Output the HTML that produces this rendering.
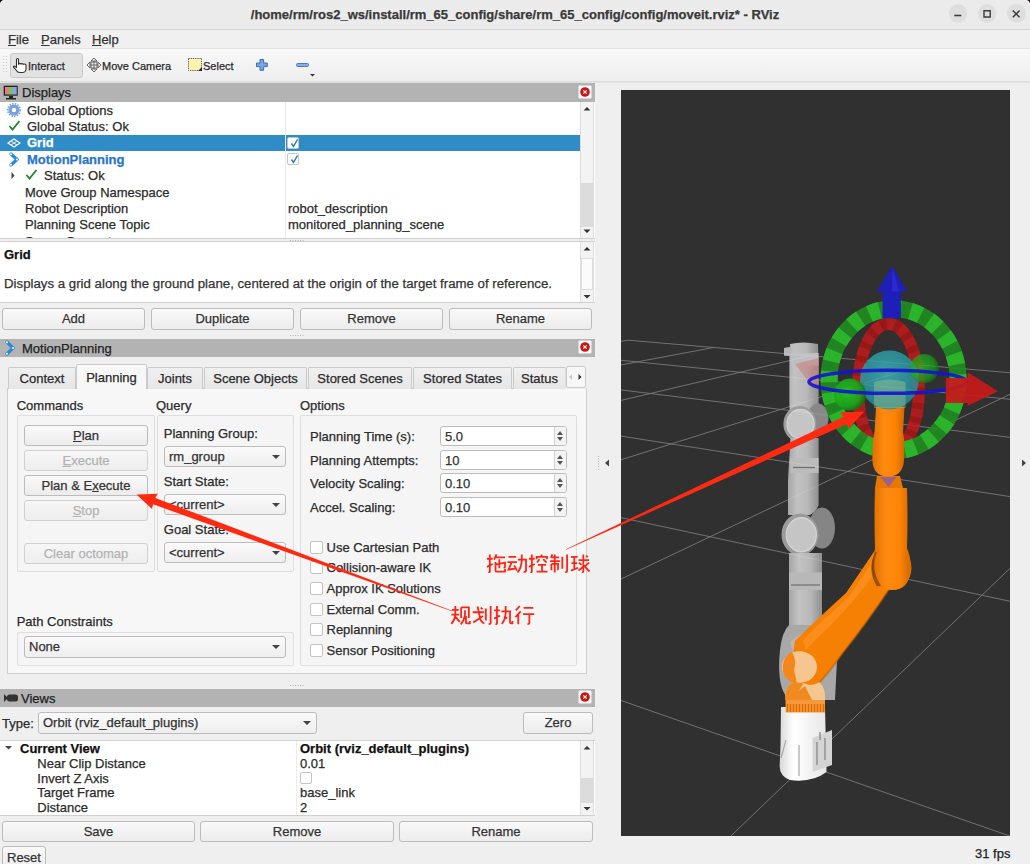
<!DOCTYPE html>
<html><head><meta charset="utf-8"><style>
*{box-sizing:border-box;margin:0;padding:0}
html,body{width:1030px;height:864px;overflow:hidden;background:#efefef;font-family:"Liberation Sans",sans-serif;font-size:13px;color:#2b2b2b;-webkit-text-stroke:0.25px}
.a{position:absolute}
.t{position:absolute;white-space:nowrap;line-height:16px}
.btn{position:absolute;border:1px solid #bcbcbc;border-radius:3px;background:linear-gradient(#f9f9f9,#ececec);text-align:center;color:#333;white-space:nowrap}
.btn.dis{color:#b3b3b3;border-color:#d0d0d0;background:linear-gradient(#f6f6f6,#eeeeee)}
.combo{position:absolute;border:1px solid #bcbcbc;border-radius:3px;background:linear-gradient(#fafafa,#eeeeee);padding-left:4px;white-space:nowrap;color:#333}
.combo:after{content:"";position:absolute;right:5px;top:50%;margin-top:-2px;border-left:4px solid transparent;border-right:4px solid transparent;border-top:4px solid #444}
.spin{position:absolute;border:1px solid #bcbcbc;border-radius:3px;background:#fff;padding-left:4px;color:#333}
.spin i{position:absolute;right:0;top:0;bottom:0;border-left:1px solid #d0d0d0;background:#f4f4f4;width:12px;border-radius:0 2px 2px 0}
.spin b{position:absolute;right:3px;border-left:3.5px solid transparent;border-right:3.5px solid transparent}
.spin b.up{top:4px;border-bottom:4px solid #555}
.spin b.dn{bottom:4px;border-top:4px solid #555}
.cb{position:absolute;border:1px solid #c4c4c4;border-radius:2px;background:#fff}
.grp{position:absolute;border:1px solid #dedede;border-radius:2px;background:#f5f5f5}
.close{position:absolute;width:14px;height:14px;border-radius:2px;background:#fff;border:1px solid #d4d4d4}
.hdr{position:absolute;left:0;width:595px;background:#b3b3b3}
</style></head><body>
<div class="a" style="left:0px;top:0px;width:1030px;height:29px;background:#ebebeb"></div>
<div class="a" style="left:0px;top:29px;width:1030px;height:1px;background:#d6d6d6"></div>
<div class="t" style="left:0;top:7px;width:1030px;text-align:center;font-weight:bold;color:#3a3a3a">/home/rm/ros2_ws/install/rm_65_config/share/rm_65_config/config/moveit.rviz* - RViz</div>
<div class="a" style="left:948.5px;top:4.4px;width:18.4px;height:18.4px;border-radius:50%;background:#dedede"></div>
<div class="a" style="left:978.0999999999999px;top:4.4px;width:18.4px;height:18.4px;border-radius:50%;background:#dedede"></div>
<div class="a" style="left:1007.1999999999999px;top:4.4px;width:18.4px;height:18.4px;border-radius:50%;background:#dedede"></div>
<svg class="a" style="left:940px;top:0" width="90" height="29"><path d="M14.3 15.5H21.3" stroke="#3c3c3c" stroke-width="1.6"/><path d="M44 10.8h6.2v6.2h-6.2z" stroke="#3c3c3c" stroke-width="1.4" fill="none"/><path d="M72.8 10.5L79.6 17.3M79.6 10.5L72.8 17.3" stroke="#3c3c3c" stroke-width="1.5"/></svg>
<svg class="a" style="left:0;top:0" width="8" height="8"><path d="M0 0H5Q0 0 0 5Z" fill="#111"/><path d="M5 0.6Q0.6 0.6 0.6 5" stroke="#fff" stroke-width="1" fill="none" opacity="0.8"/></svg>
<svg class="a" style="left:1022px;top:0" width="8" height="8"><path d="M8 0H3Q8 0 8 5Z" fill="#5a0a32"/><path d="M3 0.6Q7.4 0.6 7.4 5" stroke="#fff" stroke-width="1" fill="none" opacity="0.8"/></svg>
<div class="a" style="left:0px;top:30px;width:1030px;height:18px;background:#f0f0f0"></div>
<div class="a" style="left:0px;top:48px;width:1030px;height:1px;background:#e3e3e3"></div>
<div class="t" style="left:8px;top:32px;color:#333"><u>F</u>ile</div>
<div class="t" style="left:41px;top:32px;color:#333"><u>P</u>anels</div>
<div class="t" style="left:92px;top:32px;color:#333"><u>H</u>elp</div>
<div class="a" style="left:0px;top:49px;width:1030px;height:32px;background:linear-gradient(#f8f8f8,#eeeeee)"></div>
<div class="a" style="left:0px;top:81px;width:1030px;height:2px;background:linear-gradient(#dadada,#e6e6e6)"></div>
<div class="a" style="left:10px;top:53px;width:73px;height:25px;background:#e2e2e2;border:1px solid #c9c9c9;border-radius:3px"></div>
<svg class="a" style="left:2px;top:54px" width="6" height="24"><g fill="#c8c8c8"><rect x="1" y="2" width="1" height="1"/><rect x="4" y="2" width="1" height="1"/><rect x="1" y="5" width="1" height="1"/><rect x="4" y="5" width="1" height="1"/><rect x="1" y="8" width="1" height="1"/><rect x="4" y="8" width="1" height="1"/><rect x="1" y="11" width="1" height="1"/><rect x="4" y="11" width="1" height="1"/><rect x="1" y="14" width="1" height="1"/><rect x="4" y="14" width="1" height="1"/><rect x="1" y="17" width="1" height="1"/><rect x="4" y="17" width="1" height="1"/></g></svg>
<svg class="a" style="left:12px;top:57px" width="16" height="17"><path d="M4.5 10.5 V2.3 Q5.5 0.8 6.5 2.3 V7 Q7.7 5.8 9 7 Q10.3 6 11.5 7.3 Q12.8 6.6 14 7.8 V12.5 Q13.5 15.5 10.5 15.5 H7.5 Q5.5 15.5 4.5 13.5 L1.5 10.2 Q1.2 9 2.5 9 L4.5 10.5Z" fill="#fff" stroke="#333" stroke-width="1.1"/></svg>
<div class="t" style="left:28px;top:58px;font-size:11px;color:#2b2b2b">Interact</div>
<svg class="a" style="left:86px;top:57px" width="16" height="16"><g fill="none" stroke="#666" stroke-width="1"><path d="M8 1L11 4H5Z M8 15L11 12H5Z M1 8L4 5V11Z M15 8L12 5V11Z"/><rect x="5" y="5" width="6" height="6"/><path d="M8 4V12M4 8H12"/></g></svg>
<div class="t" style="left:102px;top:58px;font-size:11px;color:#2b2b2b">Move Camera</div>
<svg class="a" style="left:188px;top:58px" width="15" height="14"><rect x="0.5" y="0.5" width="13" height="12" fill="#f8f4b0" stroke="#555" stroke-dasharray="1.2 1" stroke-width="1"/><path d="M10 13L14 9V13Z" fill="#222"/></svg>
<div class="t" style="left:203px;top:58px;font-size:11px;color:#2b2b2b">Select</div>
<svg class="a" style="left:255px;top:58px" width="14" height="14"><path d="M5 1.5H8.6V5H12.3V8.6H8.6V12.3H5V8.6H1.5V5H5Z" fill="#7ba4dc" stroke="#3c6fb5" stroke-width="1"/></svg>
<svg class="a" style="left:295px;top:61px" width="22" height="20"><rect x="1.5" y="2.5" width="12" height="3" rx="1.2" fill="#8fb0de" stroke="#4d7cbd" stroke-width="1"/><path d="M15 13H20L17.5 15.5Z" fill="#333"/></svg>
<div class="a" style="left:0px;top:83px;width:595px;height:19px;background:#b3b3b3"></div>
<svg class="a" style="left:3px;top:85px" width="16" height="15"><rect x="0.7" y="0.7" width="14" height="10" fill="#222"/><rect x="2" y="2" width="4" height="7.5" fill="#e77"/><rect x="6" y="2" width="4" height="7.5" fill="#6c6"/><rect x="10" y="2" width="3.7" height="7.5" fill="#99e"/><path d="M6 11h4v2h3v1.5H3V13h3Z" fill="#222"/></svg>
<div class="t" style="left:22px;top:85px;color:#222">Displays</div>
<div class="close" style="left:578px;top:85px"><svg width="12" height="12" style="position:absolute;left:0;top:0"><circle cx="6" cy="6" r="4.8" fill="#cc1414"/><path d="M4.3 4.3L7.7 7.7M7.7 4.3L4.3 7.7" stroke="#fff" stroke-width="1.1"/></svg></div>
<div class="a" style="left:0px;top:102px;width:595px;height:137px;background:#fff"></div>
<div class="a" style="left:0px;top:238px;width:595px;height:1px;background:#d0d0d0"></div>
<div class="a" style="left:0px;top:135px;width:580px;height:16px;background:#308cc6"></div>
<div class="a" style="left:285px;top:102px;width:1px;height:136px;background:#e8e8e8"></div>
<div class="a" style="left:580px;top:102px;width:14px;height:136px;background:#f3f3f3;border-left:1px solid #ddd;border-right:1px solid #ddd"></div>
<div class="a" style="left:581px;top:183px;width:12px;height:44px;background:#dcdcdc"></div>
<svg class="a" style="left:580px;top:102px" width="14" height="136"><path d="M3.5 8.5L7 5L10.5 8.5Z M3.5 127.5L7 131L10.5 127.5Z" fill="#333"/></svg>
<svg class="a" style="left:7px;top:103px" width="14" height="14"><circle cx="7" cy="7" r="5.5" fill="#7aa0e0"/><circle cx="7" cy="7" r="2.2" fill="#fff"/><circle cx="7" cy="7" r="6.3" fill="none" stroke="#7aa0e0" stroke-width="1.6" stroke-dasharray="1.5 1.2"/></svg>
<div class="t" style="left:27px;top:102.5px;">Global Options</div>
<svg class="a" style="left:8px;top:119px" width="13" height="13"><path d="M1.5 7L4.5 10.5L11.5 2" stroke="#1c8a2a" stroke-width="1.8" fill="none"/></svg>
<div class="t" style="left:27px;top:118.9px;">Global Status: Ok</div>
<svg class="a" style="left:7px;top:136px" width="14" height="14"><path d="M1 7L7 3L13 7L7 11Z" fill="none" stroke="#fff" stroke-width="1.1"/><path d="M4 5L10 9M10 5L4 9" stroke="#fff" stroke-width="0.9"/></svg>
<div class="t" style="left:27px;top:135.3px;color:#fff;font-weight:bold">Grid</div>
<div class="cb" style="left:287px;top:137px;width:12px;height:12px"><svg width="11" height="11" style="position:absolute;left:1px;top:0px"><path d="M2.5 5.5 L4.5 8.5 L8.5 1.5" stroke="#2a74c4" stroke-width="1.4" fill="none"/></svg></div>
<svg class="a" style="left:8px;top:152px" width="14" height="15"><path d="M3 2L9 7.5L3 13" stroke="#2a8ad6" stroke-width="3.2" fill="none" stroke-linecap="round"/><circle cx="3" cy="2.2" r="1" fill="#fff"/><circle cx="9" cy="7.5" r="1" fill="#fff"/><circle cx="3" cy="12.8" r="1" fill="#fff"/></svg>
<div class="t" style="left:27px;top:151.7px;color:#2a75c9;font-weight:bold">MotionPlanning</div>
<div class="cb" style="left:287px;top:153px;width:12px;height:12px"><svg width="11" height="11" style="position:absolute;left:1px;top:0px"><path d="M2.5 5.5 L4.5 8.5 L8.5 1.5" stroke="#2a74c4" stroke-width="1.4" fill="none"/></svg></div>
<svg class="a" style="left:10px;top:171px" width="6" height="9"><path d="M1.5 1L4.5 4.5L1.5 8Z" fill="#444"/></svg>
<svg class="a" style="left:25px;top:168px" width="13" height="13"><path d="M1.5 7L4.5 10.5L11.5 2" stroke="#1c8a2a" stroke-width="1.8" fill="none"/></svg>
<div class="t" style="left:44px;top:168.1px;">Status: Ok</div>
<div class="t" style="left:25px;top:184.5px;">Move Group Namespace</div>
<div class="t" style="left:25px;top:200.9px;">Robot Description</div>
<div class="t" style="left:288px;top:200.9px;">robot_description</div>
<div class="t" style="left:25px;top:217.3px;">Planning Scene Topic</div>
<div class="t" style="left:288px;top:217.3px;">monitored_planning_scene</div>
<div class="a" style="left:0;top:230px;width:580px;height:8px;overflow:hidden"><div class="t" style="left:25px;top:3.5px">Scene Geometry</div></div>
<div class="a" style="left:0px;top:241px;width:595px;height:62px;background:#fff;border-top:1px solid #d0d0d0;border-bottom:1px solid #d0d0d0"></div>
<div class="t" style="left:4px;top:246.5px;font-weight:bold;color:#111">Grid</div>
<div class="t" style="left:4px;top:276px;color:#333;font-size:13.25px">Displays a grid along the ground plane, centered at the origin of the target frame of reference.</div>
<div class="a" style="left:580px;top:242px;width:14px;height:60px;background:#f3f3f3;border-left:1px solid #ddd;border-right:1px solid #ddd"></div>
<div class="a" style="left:581px;top:258px;width:12px;height:32px;background:#fbfbfb;border:1px solid #ddd"></div>
<svg class="a" style="left:580px;top:242px" width="14" height="60"><path d="M3.5 8.5L7 5L10.5 8.5Z M3.5 53L7 56.5L10.5 53Z" fill="#333"/></svg>
<div class="btn" style="left:2px;top:308px;width:143px;height:22px;line-height:20px;">Add</div>
<div class="btn" style="left:151px;top:308px;width:143px;height:22px;line-height:20px;">Duplicate</div>
<div class="btn" style="left:300px;top:308px;width:143px;height:22px;line-height:20px;">Remove</div>
<div class="btn" style="left:449px;top:308px;width:143px;height:22px;line-height:20px;">Rename</div>
<div class="a" style="left:0px;top:339px;width:595px;height:18px;background:#b3b3b3"></div>
<svg class="a" style="left:4px;top:340px" width="14" height="16"><path d="M3 2L9 8L3 14" stroke="#2a8ad6" stroke-width="3.2" fill="none" stroke-linecap="round"/><circle cx="3" cy="2.2" r="1" fill="#fff"/><circle cx="9" cy="8" r="1" fill="#fff"/><circle cx="3" cy="13.8" r="1" fill="#fff"/></svg>
<div class="t" style="left:22px;top:341px;color:#222">MotionPlanning</div>
<div class="close" style="left:578px;top:340px"><svg width="12" height="12" style="position:absolute;left:0;top:0"><circle cx="6" cy="6" r="4.8" fill="#cc1414"/><path d="M4.3 4.3L7.7 7.7M7.7 4.3L4.3 7.7" stroke="#fff" stroke-width="1.1"/></svg></div>
<div class="a" style="left:7px;top:388px;width:580px;height:286px;background:#f7f7f7;border:1px solid #cfcfcf"></div>
<div class="a" style="left:8px;top:367px;width:68px;height:22px;background:linear-gradient(#f0f0f0,#e6e6e6);border:1px solid #cacaca;border-bottom:none;border-radius:2px 2px 0 0"></div>
<div class="t" style="left:8px;top:371px;width:68px;text-align:center">Context</div>
<div class="a" style="left:147px;top:367px;width:56px;height:22px;background:linear-gradient(#f0f0f0,#e6e6e6);border:1px solid #cacaca;border-bottom:none;border-radius:2px 2px 0 0"></div>
<div class="t" style="left:147px;top:371px;width:56px;text-align:center">Joints</div>
<div class="a" style="left:204px;top:367px;width:103px;height:22px;background:linear-gradient(#f0f0f0,#e6e6e6);border:1px solid #cacaca;border-bottom:none;border-radius:2px 2px 0 0"></div>
<div class="t" style="left:204px;top:371px;width:103px;text-align:center">Scene Objects</div>
<div class="a" style="left:308px;top:367px;width:104px;height:22px;background:linear-gradient(#f0f0f0,#e6e6e6);border:1px solid #cacaca;border-bottom:none;border-radius:2px 2px 0 0"></div>
<div class="t" style="left:308px;top:371px;width:104px;text-align:center">Stored Scenes</div>
<div class="a" style="left:413px;top:367px;width:99px;height:22px;background:linear-gradient(#f0f0f0,#e6e6e6);border:1px solid #cacaca;border-bottom:none;border-radius:2px 2px 0 0"></div>
<div class="t" style="left:413px;top:371px;width:99px;text-align:center">Stored States</div>
<div class="a" style="left:513px;top:367px;width:53px;height:22px;background:linear-gradient(#f0f0f0,#e6e6e6);border:1px solid #cacaca;border-bottom:none;border-radius:2px 2px 0 0"></div>
<div class="t" style="left:513px;top:371px;width:53px;text-align:center">Status</div>
<div class="a" style="left:76px;top:364px;width:71px;height:25px;background:#f7f7f7;border:1px solid #cacaca;border-bottom:none;border-radius:2px 2px 0 0"></div>
<div class="t" style="left:76px;top:370px;width:71px;text-align:center">Planning</div>
<div class="a" style="left:565px;top:367px;width:21px;height:22px;background:#efefef"></div>
<div class="a" style="left:566px;top:366px;width:20px;height:22px;border:1px solid #cacaca;border-radius:2px;background:#f7f7f7"></div>
<svg class="a" style="left:566px;top:366px" width="20" height="22"><path d="M3 11L6 8V14Z" fill="#c8c8c8"/><path d="M12.5 8V14L15.5 11Z" fill="#333"/></svg>
<div class="a" style="left:565px;top:368px;width:1px;height:20px;background:#dcdcdc"></div>
<div class="t" style="left:16.7px;top:398px;">Commands</div>
<div class="t" style="left:156px;top:398px;">Query</div>
<div class="t" style="left:300px;top:398px;">Options</div>
<div class="grp" style="left:17px;top:415px;width:138px;height:157px"></div>
<div class="grp" style="left:157px;top:415px;width:137px;height:157px"></div>
<div class="grp" style="left:300px;top:415px;width:277px;height:251px"></div>
<div class="btn" style="left:24px;top:425px;width:124px;height:21px;line-height:19px;"><u>P</u>lan</div>
<div class="btn dis" style="left:24px;top:450px;width:124px;height:21px;line-height:19px;"><u>E</u>xecute</div>
<div class="btn" style="left:24px;top:475px;width:124px;height:21px;line-height:19px;">Plan &amp; E<u>x</u>ecute</div>
<div class="btn dis" style="left:24px;top:500px;width:124px;height:21px;line-height:19px;"><u>S</u>top</div>
<div class="btn dis" style="left:24px;top:543px;width:124px;height:21px;line-height:19px;">Clear octomap</div>
<div class="t" style="left:163.8px;top:426px;">Planning Group:</div>
<div class="combo" style="left:164px;top:446px;width:122px;height:21px;line-height:19px">rm_group</div>
<div class="t" style="left:163.8px;top:474px;">Start State:</div>
<div class="combo" style="left:164px;top:494px;width:122px;height:21px;line-height:19px">&lt;current&gt;</div>
<div class="t" style="left:163.8px;top:522px;">Goal State:</div>
<div class="combo" style="left:164px;top:542px;width:122px;height:21px;line-height:19px">&lt;current&gt;</div>
<div class="t" style="left:310px;top:429.3px;">Planning Time (s):</div>
<div class="spin" style="left:440px;top:426.3px;width:127px;height:20.0px;line-height:20.0px">5.0<i></i><b class="up"></b><b class="dn"></b></div>
<div class="t" style="left:310px;top:452.7px;">Planning Attempts:</div>
<div class="spin" style="left:440px;top:449.7px;width:127px;height:20.0px;line-height:20.0px">10<i></i><b class="up"></b><b class="dn"></b></div>
<div class="t" style="left:310px;top:476.1px;">Velocity Scaling:</div>
<div class="spin" style="left:440px;top:473.1px;width:127px;height:20.0px;line-height:20.0px">0.10<i></i><b class="up"></b><b class="dn"></b></div>
<div class="t" style="left:310px;top:499.5px;">Accel. Scaling:</div>
<div class="spin" style="left:440px;top:496.5px;width:127px;height:20.0px;line-height:20.0px">0.10<i></i><b class="up"></b><b class="dn"></b></div>
<div class="cb" style="left:310px;top:540.5px;width:13px;height:13px"></div>
<div class="t" style="left:326.5px;top:539.5px;">Use Cartesian Path</div>
<div class="cb" style="left:310px;top:561.2px;width:13px;height:13px"></div>
<div class="t" style="left:326.5px;top:560.2px;">Collision-aware IK</div>
<div class="cb" style="left:310px;top:581.9px;width:13px;height:13px"></div>
<div class="t" style="left:326.5px;top:580.9px;">Approx IK Solutions</div>
<div class="cb" style="left:310px;top:602.6px;width:13px;height:13px"></div>
<div class="t" style="left:326.5px;top:601.6px;">External Comm.</div>
<div class="cb" style="left:310px;top:623.3px;width:13px;height:13px"></div>
<div class="t" style="left:326.5px;top:622.3px;">Replanning</div>
<div class="cb" style="left:310px;top:644.0px;width:13px;height:13px"></div>
<div class="t" style="left:326.5px;top:643.0px;">Sensor Positioning</div>
<div class="t" style="left:16.7px;top:614px;">Path Constraints</div>
<div class="grp" style="left:17px;top:632px;width:277px;height:34px"></div>
<div class="combo" style="left:24px;top:636px;width:262px;height:22px;line-height:20px">None</div>
<div class="a" style="left:0px;top:689px;width:595px;height:18px;background:#b3b3b3"></div>
<svg class="a" style="left:3px;top:692px" width="16" height="12"><path d="M1 2V10L4 7V5Z" fill="#333"/><rect x="4" y="2.5" width="11" height="7" rx="2.5" fill="#333"/></svg>
<div class="t" style="left:21px;top:691px;color:#222">Views</div>
<div class="close" style="left:578px;top:690px"><svg width="12" height="12" style="position:absolute;left:0;top:0"><circle cx="6" cy="6" r="4.8" fill="#cc1414"/><path d="M4.3 4.3L7.7 7.7M7.7 4.3L4.3 7.7" stroke="#fff" stroke-width="1.1"/></svg></div>
<div class="t" style="left:2px;top:716px;">Type:</div>
<div class="combo" style="left:38px;top:712px;width:279px;height:22px;line-height:20px">Orbit (rviz_default_plugins)</div>
<div class="btn" style="left:523px;top:712px;width:70px;height:22px;line-height:20px;">Zero</div>
<div class="a" style="left:0px;top:740px;width:595px;height:76px;background:#fff;border-top:1px solid #d0d0d0;border-bottom:1px solid #d0d0d0"></div>
<div class="a" style="left:296px;top:741px;width:1px;height:74px;background:#ececec"></div>
<div class="a" style="left:580px;top:741px;width:14px;height:74px;background:#f3f3f3;border-left:1px solid #ddd;border-right:1px solid #ddd"></div>
<div class="a" style="left:581px;top:778px;width:12px;height:25px;background:#dcdcdc"></div>
<svg class="a" style="left:580px;top:741px" width="14" height="74"><path d="M3.5 8.5L7 5L10.5 8.5Z M3.5 66L7 69.5L10.5 66Z" fill="#333"/></svg>
<svg class="a" style="left:4px;top:744px" width="9" height="8"><path d="M1 2H8L4.5 5.5Z" fill="#444"/></svg>
<div class="t" style="left:20px;top:741px;font-weight:bold;color:#111">Current View</div>
<div class="t" style="left:300px;top:741px;font-weight:bold;color:#111">Orbit (rviz_default_plugins)</div>
<div class="t" style="left:37.3px;top:756.0px;">Near Clip Distance</div>
<div class="t" style="left:300px;top:756.0px;">0.01</div>
<div class="t" style="left:37.3px;top:770.6px;">Invert Z Axis</div>
<div class="t" style="left:37.3px;top:785.2px;">Target Frame</div>
<div class="t" style="left:300px;top:785.2px;">base_link</div>
<div class="t" style="left:37.3px;top:799.8px;">Distance</div>
<div class="t" style="left:300px;top:799.8px;">2</div>
<div class="cb" style="left:300px;top:772px;width:12px;height:12px"></div>
<div class="btn" style="left:2px;top:821px;width:193px;height:21px;line-height:19px;">Save</div>
<div class="btn" style="left:200px;top:821px;width:194px;height:21px;line-height:19px;">Remove</div>
<div class="btn" style="left:399px;top:821px;width:194px;height:21px;line-height:19px;">Rename</div>
<div class="btn" style="left:2px;top:846px;width:44px;height:24px;line-height:21px;text-align:left;padding-left:4px">Reset</div>
<div class="t" style="left:975px;top:846px;color:#222">31 fps</div>
<svg class="a" style="left:290px;top:238.5px" width="16" height="3"><g fill="#b4b4b4"><rect x="0.0" y="1" width="1" height="1"/><rect x="2.5" y="1" width="1" height="1"/><rect x="5.0" y="1" width="1" height="1"/><rect x="7.5" y="1" width="1" height="1"/><rect x="10.0" y="1" width="1" height="1"/><rect x="12.5" y="1" width="1" height="1"/></g></svg>
<svg class="a" style="left:290px;top:334px" width="16" height="3"><g fill="#b4b4b4"><rect x="0.0" y="1" width="1" height="1"/><rect x="2.5" y="1" width="1" height="1"/><rect x="5.0" y="1" width="1" height="1"/><rect x="7.5" y="1" width="1" height="1"/><rect x="10.0" y="1" width="1" height="1"/><rect x="12.5" y="1" width="1" height="1"/></g></svg>
<svg class="a" style="left:290px;top:683.5px" width="16" height="3"><g fill="#b4b4b4"><rect x="0.0" y="1" width="1" height="1"/><rect x="2.5" y="1" width="1" height="1"/><rect x="5.0" y="1" width="1" height="1"/><rect x="7.5" y="1" width="1" height="1"/><rect x="10.0" y="1" width="1" height="1"/><rect x="12.5" y="1" width="1" height="1"/></g></svg>
<svg class="a" style="left:597px;top:456px" width="3" height="16"><g fill="#b4b4b4"><rect x="1" y="0.0" width="1" height="1"/><rect x="1" y="2.5" width="1" height="1"/><rect x="1" y="5.0" width="1" height="1"/><rect x="1" y="7.5" width="1" height="1"/><rect x="1" y="10.0" width="1" height="1"/><rect x="1" y="12.5" width="1" height="1"/></g></svg>
<svg class="a" style="left:603px;top:458px" width="8" height="10"><path d="M6 1.5V8.5L2 5Z" fill="#444"/></svg>
<svg class="a" style="left:1020px;top:458px" width="8" height="10"><path d="M2 1.5V8.5L6 5Z" fill="#444"/></svg>
<div class="a" style="left:621px;top:90px;width:389px;height:746px;background:#303030"></div>
<svg class="a" style="left:0;top:0" width="1030" height="864" viewBox="0 0 1030 864">
<defs>
<clipPath id="vp"><rect x="621" y="90" width="389" height="746"/></clipPath>
<linearGradient id="gl" x1="0" x2="1" y1="0" y2="0"><stop offset="0" stop-color="#bdbdbd"/><stop offset="0.3" stop-color="#dedede"/><stop offset="0.65" stop-color="#d2d2d2"/><stop offset="1" stop-color="#a2a2a2"/></linearGradient>
<linearGradient id="og" x1="0" x2="1" y1="0" y2="0"><stop offset="0" stop-color="#e07000"/><stop offset="0.35" stop-color="#ff8a10"/><stop offset="0.7" stop-color="#ff8406"/><stop offset="1" stop-color="#d06800"/></linearGradient>
<linearGradient id="wb" x1="0" x2="1" y1="0" y2="0"><stop offset="0" stop-color="#d8d8d8"/><stop offset="0.3" stop-color="#ffffff"/><stop offset="1" stop-color="#e6e6e6"/></linearGradient>
<radialGradient id="cy" cx="0.45" cy="0.4" r="0.6"><stop offset="0" stop-color="#40b8c0"/><stop offset="1" stop-color="#23909a"/></radialGradient>
<radialGradient id="gs" cx="0.4" cy="0.45" r="0.6"><stop offset="0" stop-color="#22cc22"/><stop offset="0.7" stop-color="#1aa81a"/><stop offset="1" stop-color="#107010"/></radialGradient>
</defs>
<g clip-path="url(#vp)">
<path transform="translate(621 90)" d="M6.9 250.2L391.0 282.9M6.9 250.2L-2.0 251.6M-2.0 270.1L390.9 309.5M92.5 257.5L-2.0 275.3M-2.0 299.7L390.9 347.6M189.4 265.7L-2.0 310.9M-2.0 345.8L390.9 406.9M300.0 275.2L-1.9 370.4M-1.9 427.2L391.0 511.7M391.0 303.4L-2.0 490.0M-1.9 609.8L391.0 746.8M391.0 476.4L107.9 747.9" stroke="#7c7c7c" stroke-width="1" fill="none" opacity="0.85"/>
<g opacity="0.84">
<path d="M784 348 L790 347 L790 344 Q803 341 818 344 L818.6 366 L818.6 404 Q818 412 812 416 L790 416 L789.4 404 L789.4 356 L784 355Z" fill="url(#gl)"/>
<path d="M790.8 353 H818.6 V365.6 H790.8Z" fill="#dadada"/>
<path d="M784 348 L790.8 347.5 V355.8 H784Z" fill="#d0d0d0"/>
<path d="M795 364 L819 358 L819 388 L812 386Z" fill="#e88a8a" opacity="0.55"/>
<ellipse cx="818" cy="418" rx="10.5" ry="14.5" fill="#999999"/>
<ellipse cx="799.9" cy="423.9" rx="16.5" ry="18" fill="#b4b4b4"/>
<ellipse cx="800.5" cy="424" rx="13.5" ry="14.5" fill="#e2e2e2" stroke="#f2f2f2" stroke-width="1.4"/>
<path d="M790.5 438 L818.6 438 L818.6 505 Q816 512 810 515 L788 515 L788 480 Z" fill="url(#gl)"/>
<path d="M790.5 458 H818.6 V473 H790.5Z" fill="#d6d6d6"/>
<path d="M793 467.5 H815" stroke="#7a7a7a" stroke-width="1.2"/>
<ellipse cx="822" cy="528" rx="13" ry="20.5" fill="#969696"/>
<ellipse cx="800" cy="534.5" rx="18.5" ry="21" fill="#b0b0b0"/>
<ellipse cx="801.3" cy="534.7" rx="15" ry="17" fill="#e2e2e2" stroke="#f2f2f2" stroke-width="1.4"/>
<path d="M789 553 L822 553 L822 625 L789 625Z" fill="url(#gl)"/>
<path d="M789 572.6 H822 V590 H789Z" fill="#d2d2d2"/>
<path d="M791 585 H820" stroke="#7a7a7a" stroke-width="1.2"/>
<path d="M789 625 L822 625 Q838 630 837 660 L835 700 L790 700 Q776 690 780 650 Q782 632 789 625Z" fill="#c0c0c0"/>
<path d="M790 642 Q805 628 826 632 L826 655 L795 660Z" fill="#d8cfc4"/>
</g>
<path d="M781 707 L825 707 L826.5 772 Q812 783 790 780 Q779 776 779.7 765 L780.5 745Z" fill="url(#wb)"/>
<path d="M812.6 738 L832 730 L832 765 L812.6 772Z" fill="#d4d4d4"/>
<path d="M817 742 V765 M825 738 V760 M820 732 V740" stroke="#8e8e8e" stroke-width="1.4"/>
<path d="M786 740 L781 758 M799 745 V776" stroke="#a8a8a8" stroke-width="1.2"/>
<rect x="785.6" y="698.7" width="39.4" height="13.8" fill="#f59a3c"/>
<path d="M787.5 704 V712 M790.5 704 V712 M793.5 704 V712 M796.5 704 V712 M799.5 704 V712 M802.5 704 V712 M805.5 704 V712 M808.5 704 V712 M811.5 704 V712 M814.5 704 V712 M817.5 704 V712 M820.5 704 V712 M823.5 704 V712" stroke="#e06a00" stroke-width="1.4"/>
<path d="M785.6 700 Q784 686 795 681 L815 680 Q826 684 825 700Z" fill="#f6c690"/>
<path d="M785.6 700 Q784 686 795 681 L805 681 L798 692 L808 700Z" fill="#f08a1e"/>
<path d="M797 692 L805 686 L812 700 L800 700Z" fill="#ee8a20"/>
<path d="M795 641 Q813 623 846 593 L874.5 551 L890 588 Q866 624 842 654 Q831 670 820 682 Q806 690 797 676 Q791 660 795 641Z" fill="#f58004"/>
<path d="M803 640 Q818 624 849 597 L876 556 L880 566 Q858 598 828 628 Q815 640 806 650Z" fill="#ff9830" opacity="0.55"/>
<path d="M890 588 Q866 624 842 654 Q831 670 820 682" stroke="#b05a00" stroke-width="2" fill="none" opacity="0.5"/>
<ellipse cx="799.5" cy="667" rx="17.5" ry="15.8" fill="#f7c690"/>
<path d="M790 652.5 Q781 660 783 672 Q786 682 797 683 L794 670 Q797 660 792 652Z" fill="#f5861a"/>
<ellipse cx="892" cy="568" rx="19.4" ry="21.8" fill="#f88000"/>
<path d="M876 553 Q868 570 878 586" stroke="#4a2800" stroke-width="2.2" fill="none" opacity="0.55"/>
<ellipse cx="888.5" cy="389" rx="30.5" ry="65" fill="none" stroke="#c21a1a" stroke-width="12" opacity="0.85"/>
<ellipse cx="888.5" cy="389" rx="30.5" ry="65" fill="none" stroke="#7e1010" stroke-width="12" stroke-dasharray="6 8" opacity="0.4"/>
<ellipse cx="893.6" cy="379.7" rx="64.5" ry="71" fill="none" stroke="#1f8f1f" stroke-width="17" opacity="0.9"/>
<ellipse cx="893.6" cy="379.7" rx="64.5" ry="71" fill="none" stroke="#2cb82c" stroke-width="17" stroke-dasharray="11 10" opacity="0.9"/>
<path d="M876 488 L907 488 Q908 520 907 548 Q912 560 910.6 572 Q908 590 892 590 Q876 589 874 575 Q872 560 875 548 Q874 520 875 488Z" fill="url(#og)"/>
<path d="M876 552 Q869 570 880 586" stroke="#4a2800" stroke-width="2" fill="none" opacity="0.5"/>
<path d="M877 476 L900 476 L903 488 L875 488Z" fill="#e67800"/>
<path d="M876 407 L904.5 407 L903 432 Q905 442 904 460 Q903 476.5 888 476.5 Q873 476.5 872.4 460 Q872 442 874.5 432Z" fill="url(#og)"/>
<path d="M880 477 L896.5 477 L888.5 487Z" fill="#9a6090"/>
<g>
<circle cx="889.4" cy="380" r="29.5" fill="url(#cy)" opacity="0.8"/>
<path d="M874 382 Q889 377 905.6 382 V408 H874Z" fill="#98c090" opacity="0.45"/>
<circle cx="850" cy="394.6" r="16" fill="url(#gs)" opacity="0.9"/>
<circle cx="924.4" cy="368.5" r="14.5" fill="url(#gs)" opacity="0.7"/>
<ellipse cx="888" cy="381.8" rx="79" ry="11.5" fill="none" stroke="#1414d0" stroke-width="3.6" opacity="0.9"/>
<path d="M892.4 266 L907 291.6 L900.9 291.6 L900.9 318.3 L882.6 318.3 L882.6 291.6 L876.6 291.6Z" fill="#1e1eb8"/>
<path d="M892.4 266 L899 291.6 L892 291.6 Z" fill="#2a2ad0"/>
<path d="M945.8 378 L967.7 378 L967.7 372.3 L998 391.3 L967.7 405.8 L967.7 403 L945.8 403Z" fill="#c81a1a" opacity="0.92"/>
</g>
</g>
<path d="M452.1 610.7 L155.4 498.0 L157.6 493.8 L136.5 494.6 L152.0 508.9 L153.1 504.3 L451.9 611.3Z" fill="#ff2a12"/>
<path d="M566.1 549.8 L846.7 424.1 L848.3 429.1 L864.4 411.5 L840.5 412.3 L843.4 416.8 L565.9 549.2Z" fill="#ff2a12"/>
<path transform="translate(486.5 554) scale(0.950)" d="M0.5 5H6.5M3.5 0.5V18.5Q3.5 19.5 2 19M0.5 13.5L6.5 10.5M10.5 0.5L8 6M9 3.5H19.5M8.5 11.5L19.5 9V13.5Q19.5 14.5 18 14M13.5 5.5V15M9.5 8.5V17.5Q9.5 18.5 11 18.5H19.5V15.5" stroke="#ff2414" stroke-width="1.89" fill="none" stroke-linecap="butt"/>
<path transform="translate(507.5 554) scale(0.950)" d="M1 3H9M0 8.5H10M4.5 8.5L1 16.5L9.5 15M7 12L10 17.5M11 6H19.5V17Q19.5 19.5 17 18.5M15 0.5V7Q14.5 15 10.5 19.5" stroke="#ff2414" stroke-width="1.89" fill="none" stroke-linecap="butt"/>
<path transform="translate(528.5 554) scale(0.950)" d="M0.5 5H6.5M3.5 0.5V18.5Q3.5 19.5 2 19M0.5 13.5L6.5 10.5M13.5 0.5L14 2.5M8.5 5.5V3H19.5V5.5M11.5 5.5L9 9M15.5 5.5L19 9M10 11.5H18.5M14.2 11.5V18.5M8.5 18.5H20" stroke="#ff2414" stroke-width="1.89" fill="none" stroke-linecap="butt"/>
<path transform="translate(549.5 554) scale(0.950)" d="M3 0.5L1.5 4M1.5 3.5H10M0.5 7.5H11M5.5 0.5V19.5M2 10.5V17M2 10.5H9V15.5Q9 16.5 8 16M13.5 3V15.5M18.5 0.5V18Q18.5 19.5 16.5 19" stroke="#ff2414" stroke-width="1.89" fill="none" stroke-linecap="butt"/>
<path transform="translate(570.5 554) scale(0.950)" d="M0.5 3H7.5M1 9.5H7M4 3V16.5M0.5 17.5L8 14.5M8.5 6.5H19.5M13.5 0.5V18Q13.5 19.5 12 19M16.5 1.5L18 3.5M9 9L11.5 11.5M8.5 17.5L13 13.5M19.5 9L15 13M14 12L20 18.5" stroke="#ff2414" stroke-width="1.89" fill="none" stroke-linecap="butt"/>
<path transform="translate(451.0 605.5) scale(0.965)" d="M1 4.5H8M0.5 9.5H8.5M4.5 0.5V9.5Q4 15 0.5 19M5 12L9 17M10.5 2V13M10.5 2H18.5V13M14.5 5V10Q13.5 16 10 19.5M15.5 11V17.5Q15.5 18.5 17 18.5H19.5V16" stroke="#ff2414" stroke-width="1.87" fill="none" stroke-linecap="butt"/>
<path transform="translate(472.3 605.5) scale(0.965)" d="M0.5 7H12M5.5 1L8 13Q9.5 18 12.5 18.5M1 17.5L11 11M9 2L10.5 4M14 3V15.5M19 0.5V18Q19 19.5 17 19" stroke="#ff2414" stroke-width="1.87" fill="none" stroke-linecap="butt"/>
<path transform="translate(493.6 605.5) scale(0.965)" d="M0.5 5H6.5M3.5 0.5V18.5Q3.5 19.5 2 19M0.5 13.5L6.5 10.5M8 6H17V17Q17 19 19.5 18.5V16M12.5 0.5V8Q12 15 8.5 19M11 11L14 13.5" stroke="#ff2414" stroke-width="1.87" fill="none" stroke-linecap="butt"/>
<path transform="translate(514.9 605.5) scale(0.965)" d="M5 0.5L1 5M6 6L0.5 12M3.5 9V19.5M9 2.5H19M8.5 9H20M15 9V18Q15 19.5 13 19" stroke="#ff2414" stroke-width="1.87" fill="none" stroke-linecap="butt"/>
</svg>
</body></html>
